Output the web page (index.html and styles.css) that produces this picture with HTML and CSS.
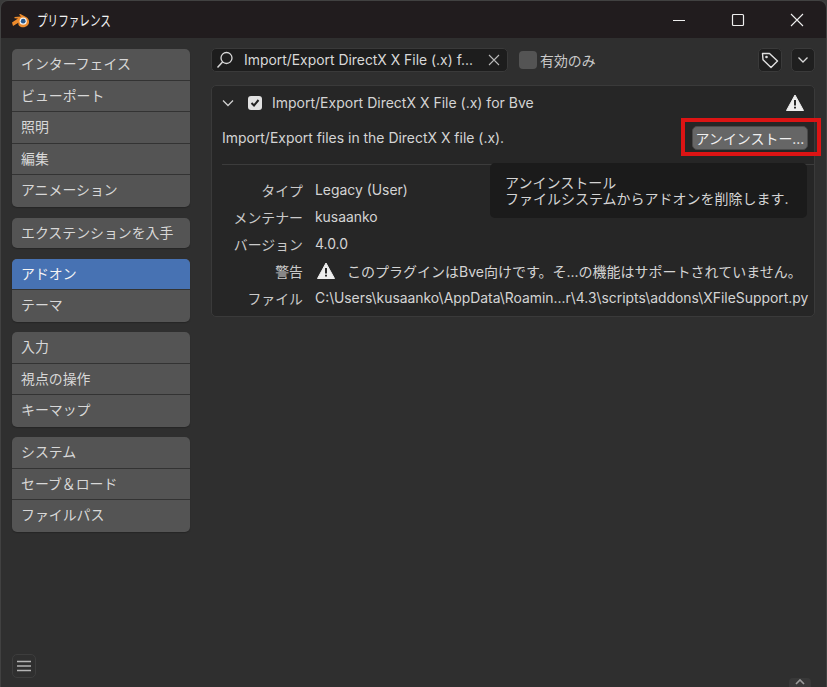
FILE: index.html
```html
<!DOCTYPE html>
<html lang="ja">
<head>
    <meta charset="UTF-8">
    <title>プリファレンス</title>
    <link rel="stylesheet" href="styles.css">
</head>
<body>
<div class="window">
    <header class="titlebar">
        <svg class="logo" width="20" height="18" viewBox="0 0 20 18">
            <path d="M1 11.5 L7 7.5 L3.5 7.2 L3.5 6 L10 5.5 L8 3.6 L9.4 3 L15 6 C18.5 8 19 12 16.5 14.5 C14 17 9.5 17 7.5 14 L7.3 11.8 L2 15 Z" fill="#ed8b2c"/>
            <circle cx="12.2" cy="10.2" r="3.6" fill="#f2f2f2"/>
            <circle cx="12.2" cy="10.2" r="2.4" fill="#28598e"/>
        </svg>
        <span class="title">プリファレンス</span>
        <div class="winbtns">
            <svg width="14" height="14" viewBox="0 0 14 14"><path d="M1 7.5H13" stroke="#eee" stroke-width="1"/></svg>
            <svg width="14" height="14" viewBox="0 0 14 14"><rect x="1.5" y="1.5" width="11" height="11" rx="1" fill="none" stroke="#eee" stroke-width="1.2"/></svg>
            <svg width="14" height="14" viewBox="0 0 14 14"><path d="M1 1L13 13M13 1L1 13" stroke="#eee" stroke-width="1.1"/></svg>
        </div>
    </header>

    <div class="content">
        <!-- left menu -->
        <aside class="sidebar">
            <nav class="menu-groups">
                <div class="group">
                    <div class="item">インターフェイス</div>
                    <div class="item">ビューポート</div>
                    <div class="item">照明</div>
                    <div class="item">編集</div>
                    <div class="item">アニメーション</div>
                </div>
                <div class="group extensions">
                    <div class="item single">エクステンションを入手</div>
                </div>
                <div class="group">
                    <div class="item active">アドオン</div>
                    <div class="item">テーマ</div>
                </div>
                <div class="group">
                    <div class="item">入力</div>
                    <div class="item">視点の操作</div>
                    <div class="item">キーマップ</div>
                </div>
                <div class="group">
                    <div class="item">システム</div>
                    <div class="item">セーブ＆ロード</div>
                    <div class="item">ファイルパス</div>
                </div>
            </nav>
            <div class="hamburger">
                <svg width="16" height="12" viewBox="0 0 16 12"><path d="M1 1.5H15M1 6H15M1 10.5H15" stroke="#b4b4b4" stroke-width="1.5"/></svg>
            </div>
        </aside>

        <!-- addon panel -->
        <main class="main">
            <div class="toolbar">
                <div class="search">
                    <svg width="20" height="20" viewBox="0 0 20 20"><circle cx="11.5" cy="8" r="5.5" fill="none" stroke="#d8d8d8" stroke-width="1.3"/><path d="M7.5 12L2.5 17.5" stroke="#d8d8d8" stroke-width="1.5"/></svg>
                    <span class="search-text">Import/Export DirectX X File (.x) f...</span>
                    <svg width="12" height="12" viewBox="0 0 12 12"><path d="M1 1L11 11M11 1L1 11" stroke="#b8b8b8" stroke-width="1.1"/></svg>
                </div>
                <label class="enabled-only"><span class="check-off"></span>有効のみ</label>
                <div class="tool-right">
                    <div class="tool-btn">
                        <svg width="20" height="20" viewBox="0 0 20 20"><path d="M2.5 3.5H9.5L17.5 11L11 17.5L3 9.8Z" fill="none" stroke="#e0e0e0" stroke-width="1.4" stroke-linejoin="round"/><circle cx="6.5" cy="7" r="1.3" fill="#e0e0e0"/></svg>
                    </div>
                    <div class="tool-btn">
                        <svg width="12" height="8" viewBox="0 0 12 8"><path d="M1.5 1.5L6 6L10.5 1.5" fill="none" stroke="#d8d8d8" stroke-width="1.3"/></svg>
                    </div>
                </div>
            </div>

            <section class="panel">
                <div class="panel-head">
                    <svg width="12" height="8" viewBox="0 0 12 8"><path d="M1 1.5L6 6.5L11 1.5" fill="none" stroke="#d0d0d0" stroke-width="1.3"/></svg>
                    <span class="check-on">
                        <svg width="10" height="10" viewBox="0 0 10 10"><path d="M1.5 5L4 7.5L8.5 2" fill="none" stroke="#222" stroke-width="2"/></svg>
                    </span>
                    <span class="panel-title">Import/Export DirectX X File (.x) for Bve</span>
                    <svg class="warn-top" width="18" height="18" viewBox="0 0 18 18"><path d="M9 1L17.5 16.5H0.5Z" fill="#eee" stroke="#eee" stroke-linejoin="round"/><path d="M9 6V11.5M9 12.7V14.5" stroke="#2a2a2a" stroke-width="2"/></svg>
                </div>
                <div class="desc-row">
                    <span>Import/Export files in the DirectX X file (.x).</span>
                    <button class="uninstall">アンインストー...</button>
                </div>
                <div class="divider"></div>
                <div class="info">
                    <div class="label">タイプ</div>
                    <div>Legacy (User)</div>
                    <div class="label">メンテナー</div>
                    <div>kusaanko</div>
                    <div class="label">バージョン</div>
                    <div>4.0.0</div>
                    <div class="label">警告</div>
                    <div class="warning">
                        <svg width="18" height="18" viewBox="0 0 18 18"><path d="M9 1L17.5 16.5H0.5Z" fill="#eee" stroke="#eee" stroke-linejoin="round"/><path d="M9 6V11.5M9 12.7V14.5" stroke="#2a2a2a" stroke-width="2"/></svg>
                        <span>このプラグインはBve向けです。そ...の機能はサポートされていません。</span>
                    </div>
                    <div class="label">ファイル</div>
                    <div>C:\Users\kusaanko\AppData\Roamin...r\4.3\scripts\addons\XFileSupport.py</div>
                </div>

                <div class="highlight"></div>
                <div class="tooltip">
                    <div>アンインストール</div>
                    <div>ファイルシステムからアドオンを削除します.</div>
                </div>
            </section>
            <div class="scroll-arrow">
                <svg width="10" height="7" viewBox="0 0 10 7"><path d="M1 6L5 2L9 6" fill="none" stroke="#9a9a9a" stroke-width="1.6"/></svg>
            </div>
        </main>
    </div>
</div>
</body>
</html>
```

FILE: styles.css
```css
* {
    box-sizing: border-box;
}
html, body {
    height: 100%;
}
body {
    margin: 0;
    background-color: #3a3a3a;
    font-family: 'Inter', 'Noto Sans CJK JP', sans-serif;
    font-size: 13.9px;
    color: #d4d4d4;
    overflow: hidden;
}
.window {
    height: 687px;
    display: flex;
    flex-direction: column;
    border-radius: 8px 8px 0 0;
    border: 1px solid #414141;
    border-bottom: none;
    overflow: hidden;
}
.titlebar {
    height: 37px;
    flex: none;
    background-color: #211c1e;
    display: flex;
    align-items: center;
    padding-left: 10px;
    color: #f2f2f2;
}
.logo {
    flex: none;
}
.title {
    margin-left: 6px;
    font-size: 14.5px;
    display: inline-block;
    transform: scaleX(0.73);
    transform-origin: left center;
}
.winbtns {
    margin-left: auto;
    display: flex;
    gap: 45px;
    padding-right: 22px;
}
.content {
    flex: 1;
    display: flex;
    background-color: #2f2f2f;
}
.sidebar {
    width: 210px;
    flex: none;
    padding: 11px 21px 0 11px;
    display: flex;
    flex-direction: column;
}
.menu-groups {
    display: flex;
    flex-direction: column;
    gap: 10.4px;
}
.group {
    border-radius: 5px;
    overflow: hidden;
    background-color: #545454;
    box-shadow: 0 1px 1px #262626;
}
.group.extensions {
    margin-top: 1px;
}
.item {
    height: 31.5px;
    line-height: 30px;
    padding-left: 9px;
    color: #d8d8d8;
    border-bottom: 1px solid #333;
}
.item:last-child {
    border-bottom: none;
}
.item.single {
    height: 30.5px;
}
.item.active {
    background-color: #4772b3;
    color: #f5f5f5;
}
.hamburger {
    margin-top: auto;
    margin-bottom: 9px;
    width: 24px;
    height: 24px;
    border: 1px solid #3d3d3d;
    border-radius: 5px;
    display: flex;
    align-items: center;
    justify-content: center;
}
.main {
    flex: 1;
    padding: 10px 11px 0 0;
    position: relative;
}
.toolbar {
    display: flex;
    align-items: center;
    height: 24px;
}
.search {
    width: 297px;
    height: 24px;
    background-color: #1d1d1d;
    border: 1px solid #3a3a3a;
    border-radius: 5px;
    display: flex;
    align-items: center;
    padding: 0 7px 0 3px;
}
.search-text {
    margin-left: 9px;
    flex: 1;
    white-space: nowrap;
    color: #d8d8d8;
}
.enabled-only {
    display: flex;
    align-items: center;
    margin-left: 11px;
    color: #cacaca;
}
.check-off {
    width: 18px;
    height: 18px;
    border-radius: 4px;
    background-color: #545454;
    margin-right: 3px;
}
.tool-right {
    margin-left: auto;
    display: flex;
    gap: 9px;
}
.tool-btn {
    width: 24px;
    height: 24px;
    background-color: #1f1f1f;
    border: 1px solid #3a3a3a;
    border-radius: 5px;
    display: flex;
    align-items: center;
    justify-content: center;
}
.panel {
    margin-top: 13px;
    height: 232px;
    background-color: #262626;
    border: 1px solid #3a3a3a;
    border-radius: 5px;
    position: relative;
}
.panel-head {
    height: 33px;
    margin-bottom: 1px;
    display: flex;
    align-items: center;
    padding: 0 10px 0 10px;
}
.check-on {
    width: 14px;
    height: 14px;
    margin-left: 14px;
    border-radius: 3px;
    background-color: #e2e2e2;
    display: flex;
    align-items: center;
    justify-content: center;
}
.panel-title {
    margin-left: 10px;
    font-size: 14px;
}
.warn-top {
    margin-left: auto;
}
.desc-row {
    height: 35px;
    display: flex;
    align-items: center;
    justify-content: space-between;
    padding: 0 6px 0 10px;
    font-size: 13.95px;
}
.uninstall {
    width: 116px;
    height: 24px;
    padding: 0;
    background-color: #666;
    border: 1px solid #4a4a4a;
    border-radius: 5px;
    color: #f0f0f0;
    font: inherit;
    white-space: nowrap;
}
.divider {
    height: 1px;
    margin: 9px 0 0 10px;
    background-color: #3c3c3c;
}
.info {
    display: grid;
    grid-template-columns: 91px 1fr;
    column-gap: 12px;
    grid-auto-rows: 27.2px;
    align-items: center;
    margin-top: 11px;
    white-space: nowrap;
}
.label {
    text-align: right;
    color: #cacaca;
}
.warning {
    display: flex;
    align-items: center;
    gap: 12px;
    padding-left: 2px;
    font-size: 14px;
}
.highlight {
    position: absolute;
    left: 469px;
    top: 32px;
    width: 140px;
    height: 38px;
    border: 4px solid #dc1414;
}
.tooltip {
    position: absolute;
    left: 278px;
    top: 77px;
    width: 317px;
    height: 55px;
    padding: 12px 15px;
    background-color: #1b1b1b;
    border-radius: 5px;
    line-height: 16px;
    font-size: 14px;
    white-space: nowrap;
}
.scroll-arrow {
    position: absolute;
    right: 15px;
    bottom: 0;
    width: 22px;
    height: 9px;
    background-color: #383838;
    border-radius: 4px 4px 0 0;
    display: flex;
    justify-content: center;
    overflow: hidden;
}
```
